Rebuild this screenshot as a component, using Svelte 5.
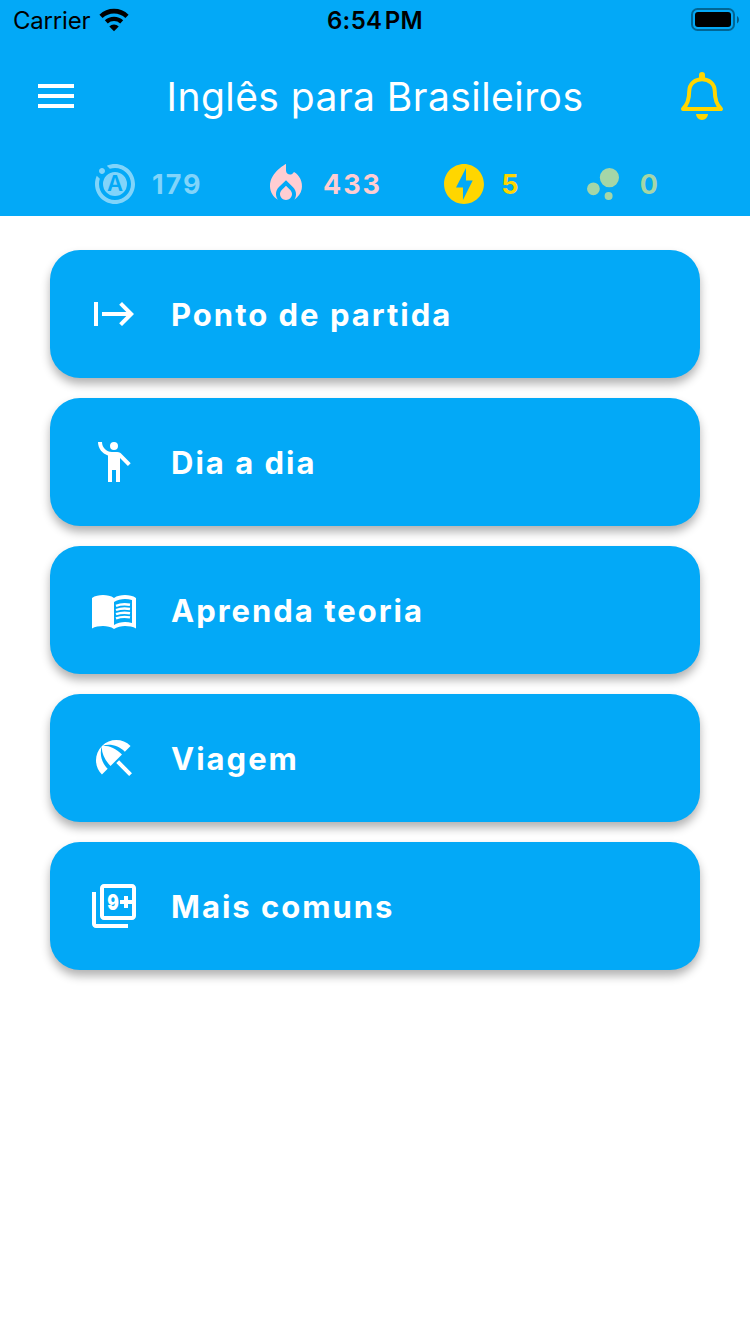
<script lang="ts">
	const stats = [
		{ icon: 'auto', value: 179, color: '#81d4fa' },
		{ icon: 'fire', value: 433, color: '#ffcdd2' },
		{ icon: 'bolt', value: 5, color: '#ffd600' },
		{ icon: 'bubbles', value: 0, color: '#a5d6a7' }
	];

	const lessons = [
		{ icon: 'start', title: 'Ponto de partida' },
		{ icon: 'person', title: 'Dia a dia' },
		{ icon: 'book', title: 'Aprenda teoria' },
		{ icon: 'beach', title: 'Viagem' },
		{ icon: 'filter', title: 'Mais comuns' }
	];

	const icons: Record<string, string> = {
		menu: 'M3 18h18v-2H3v2zm0-5h18v-2H3v2zm0-7v2h18V6H3z',
		auto: 'M2.88 7.88l1.54 1.54C4.15 10.23 4 11.1 4 12c0 4.41 3.59 8 8 8s8-3.59 8-8-3.59-8-8-8c-.9 0-1.77.15-2.58.42L7.89 2.89C9.15 2.32 10.54 2 12 2c5.52 0 10 4.48 10 10s-4.48 10-10 10S2 17.52 2 12c0-1.47.32-2.86.88-4.12zM7 5.5C7 6.33 6.33 7 5.5 7S4 6.33 4 5.5 4.67 4 5.5 4 7 4.67 7 5.5zM12 6a6 6 0 1 1 0 12 6 6 0 0 1 0-12z',
		fire: 'M12 12.9l-2.13 2.09C9.31 15.55 9 16.28 9 17.06 9 18.68 10.35 20 12 20s3-1.32 3-2.94c0-.78-.31-1.52-.87-2.07L12 12.9zM16 6l-.44.55C14.38 8.02 12 7.19 12 5.3V2S4 6 4 13c0 2.92 1.56 5.47 3.89 6.86-.56-.79-.89-1.76-.89-2.8 0-1.32.52-2.56 1.47-3.5L12 10.1l3.53 3.47c.95.93 1.47 2.17 1.47 3.5 0 1.02-.31 1.96-.85 2.75 1.89-1.15 3.29-3.06 3.71-5.3.66-3.55-1.07-6.9-3.86-8.52z',
		bolt: 'M12 2.02c-5.51 0-9.98 4.47-9.98 9.98s4.47 9.98 9.98 9.98 9.98-4.47 9.98-9.98S17.51 2.02 12 2.02zM11.48 20v-6.26H8L13 4v6.26h3.35L11.48 20z',
		bubbles:
			'M7.2 11.2a3.2 3.2 0 1 1 0 6.4 3.2 3.2 0 0 1 0-6.4zM14.8 16a2 2 0 1 1 0 4 2 2 0 0 1 0-4zM15.2 4a4.8 4.8 0 1 1 0 9.6 4.8 4.8 0 0 1 0-9.6z',
		start: 'M14.59 7.41L18.17 11H6v2h12.17l-3.59 3.59L16 18l6-6-6-6-1.41 1.41zM2 6v12h2V6H2z',
		person:
			'M12 2a2 2 0 1 1 0 4 2 2 0 0 1 0-4zM15.89 8.11C15.5 7.72 14.83 7 13.53 7h-2.54C8.24 6.99 6 4.75 6 2H4c0 3.16 2.11 5.84 5 6.71V22h2v-6h2v6h2V10.05L18.95 14l1.41-1.41-4.47-4.48z',
		book: 'M17.5 4.5c-1.95 0-4.05.4-5.5 1.5-1.45-1.1-3.55-1.5-5.5-1.5S2.45 4.9 1 6v15.2C2.4 20.4 4.7 20 6.5 20c1.95 0 4.05.4 5.5 1.5 1.35-.85 3.8-1.5 5.5-1.5 1.8 0 4.1.4 5.5 1.2V6c-1.45-1.1-3.55-1.5-5.5-1.5zM21 18.5c-1.1-.35-2.3-.5-3.5-.5-1.7 0-4.15.65-5.5 1.5V8c1.35-.85 3.8-1.5 5.5-1.5 1.2 0 2.4.15 3.5.5v11.5z',
		beach: 'M13.127 14.56l1.43-1.43 6.44 6.443L19.57 21zM17.42 8.83l2.86-2.86c-3.95-3.95-10.35-3.96-14.3-.02 3.93-1.3 8.31-.25 11.44 2.88zM5.95 5.98c-3.94 3.95-3.93 10.35.02 14.3l2.86-2.86C5.7 14.29 4.65 9.91 5.95 5.98zM5.97 5.96l-.01.01c-.38 3.01 1.17 6.88 4.3 10.02l5.73-5.73c-3.13-3.13-7.01-4.68-10.02-4.3z',
		filter: 'M3 5H1v16c0 1.1.9 2 2 2h16v-2H3V5zM21 1H7c-1.1 0-2 .9-2 2v14c0 1.1.9 2 2 2h14c1.1 0 2-.9 2-2V3c0-1.1-.9-2-2-2zm0 8h-2V7h-2v2h-2v2h2v2h2v-2h2v6H7V3h14v6z'
	};
</script>

{#snippet icon(name: string)}
	<svg class="icon" viewBox="0 0 24 24">
		<path d={icons[name]} />
		{#if name === 'auto'}
			<text class="letter" x="12" y="15.6">A</text>
		{:else if name === 'book'}
			{#each [9.9, 12, 14.1, 16.2] as y}
				<path class="line" d="M13 {y}c2-.75 4.500-.95 7-.5" />
			{/each}
		{:else if name === 'filter'}
			<text class="digit" x="8.6" y="14" textLength="5.8" lengthAdjust="spacingAndGlyphs">9</text>
		{/if}
	</svg>
{/snippet}

<div class="screen">
	<header>
		<div class="status">
			<div class="carrier">
				<span>Carrier</span>
				<svg width="30" height="24" viewBox="0 1 30 24">
					<g fill="none" stroke="#000">
						<path d="M2 9.3a18.9 18.9 0 0 1 26 0" stroke-width="4.6" />
						<path d="M7.3 14.9a11.2 11.2 0 0 1 15.4 0" stroke-width="4.3" />
					</g>
					<path d="M15 24.200l-4.700-4.600a6.500 6.500 0 0 1 9.400 0z" />
				</svg>
			</div>
			<span class="time">6:54&#8202;PM</span>
			<svg class="battery" width="50" height="24" viewBox="0 0 50 24">
				<rect x="2" y="1" width="42" height="21" rx="5.5" />
				<rect class="level" x="5" y="4" width="36" height="15" rx="3" />
				<path class="tip" d="M47 8c2.600 1.500 2.600 6 0 7.500z" />
			</svg>
		</div>

		<div class="bar">
			{@render icon('menu')}
			<h1>Inglês para Brasileiros</h1>
			<svg class="bell" width="44" height="48" viewBox="0 0 44 48">
				<path
					d="M3 37C7 33 9.200 26 9.200 19.500C9.200 11.500 15 7.300 22 7.300S34.800 11.500 34.800 19.500C34.800 26 37 33 41 37Z"
				/>
				<path class="solid" d="M19 7V3a3 3 0 0 1 6 0v4zM16 42h12a6 6 0 0 1-12 0z" />
			</svg>
		</div>

		<div class="stats">
			{#each stats as stat}
				<div class="stat" style="color: {stat.color}">
					{@render icon(stat.icon)}
					<span>{stat.value}</span>
				</div>
			{/each}
		</div>
	</header>

	<main>
		{#each lessons as lesson}
			<button class="card">
				{@render icon(lesson.icon)}
				<span>{lesson.title}</span>
			</button>
		{/each}
	</main>
</div>

<style>
	:global(body) {
		background: #fff;
	}
	.screen {
		width: 750px;
		min-height: 1334px;
		font-family: Inter, sans-serif;
	}
	header {
		height: 216px;
		background: #03a9f7;
	}

	.status {
		display: grid;
		grid-template-columns: 1fr auto 1fr;
		align-items: center;
		height: 40px;
		padding: 0 10px 0 13px;
		font-size: 24px;
	}
	.carrier {
		display: flex;
		align-items: center;
		gap: 9px;
		letter-spacing: -0.2px;
	}
	.time {
		margin-right: 3px;
		font-weight: 600;
		letter-spacing: 0.35px;
	}
	.battery {
		justify-self: end;
	}
	.battery rect {
		fill: none;
		stroke: rgba(0, 0, 0, 0.4);
		stroke-width: 2;
	}
	.battery .level {
		fill: #000;
		stroke: none;
	}
	.battery .tip {
		fill: rgba(0, 0, 0, 0.45);
	}

	.icon {
		flex: none;
		width: 48px;
		height: 48px;
		fill: currentColor;
		letter-spacing: 0;
	}
	.letter {
		fill: #03a9f7;
		font-size: 11px;
		font-weight: 600;
		text-anchor: middle;
	}
	.digit {
		font-size: 11px;
		font-weight: 900;
	}
	.line {
		fill: none;
		stroke: currentColor;
		stroke-width: 1.2;
	}

	.bar {
		display: flex;
		align-items: center;
		justify-content: space-between;
		height: 112px;
		padding: 0 26px 0 32px;
		color: #fff;
	}
	h1 {
		margin: 0 0 0 -10px;
		font-size: 39px;
		font-weight: 375;
		letter-spacing: 0.45px;
	}
	.bell {
		fill: none;
		stroke: #ffd600;
		stroke-width: 4;
		stroke-linejoin: round;
	}
	.bell .solid {
		fill: #ffd600;
		stroke: none;
	}

	.stats {
		display: flex;
		justify-content: space-between;
		height: 64px;
		padding: 0 90px 0 91px;
	}
	.stat {
		display: flex;
		align-items: center;
		gap: 13px;
		font-size: 27px;
		font-weight: 650;
		letter-spacing: 2px;
	}
	.stat:nth-child(2) {
		margin-left: 1px;
	}

	main {
		display: flex;
		flex-direction: column;
		gap: 20px;
		padding: 34px 50px;
	}
	.card {
		display: flex;
		align-items: center;
		gap: 33px;
		height: 128px;
		padding: 0 40px;
		border: none;
		border-radius: 30px;
		background: #03a9f7;
		box-shadow: 0 6px 10px rgba(0, 0, 0, 0.3);
		color: #fff;
		font-family: inherit;
		font-size: 31px;
		font-weight: 660;
		letter-spacing: 2px;
	}
	.card span {
		padding-top: 1px;
	}
</style>
